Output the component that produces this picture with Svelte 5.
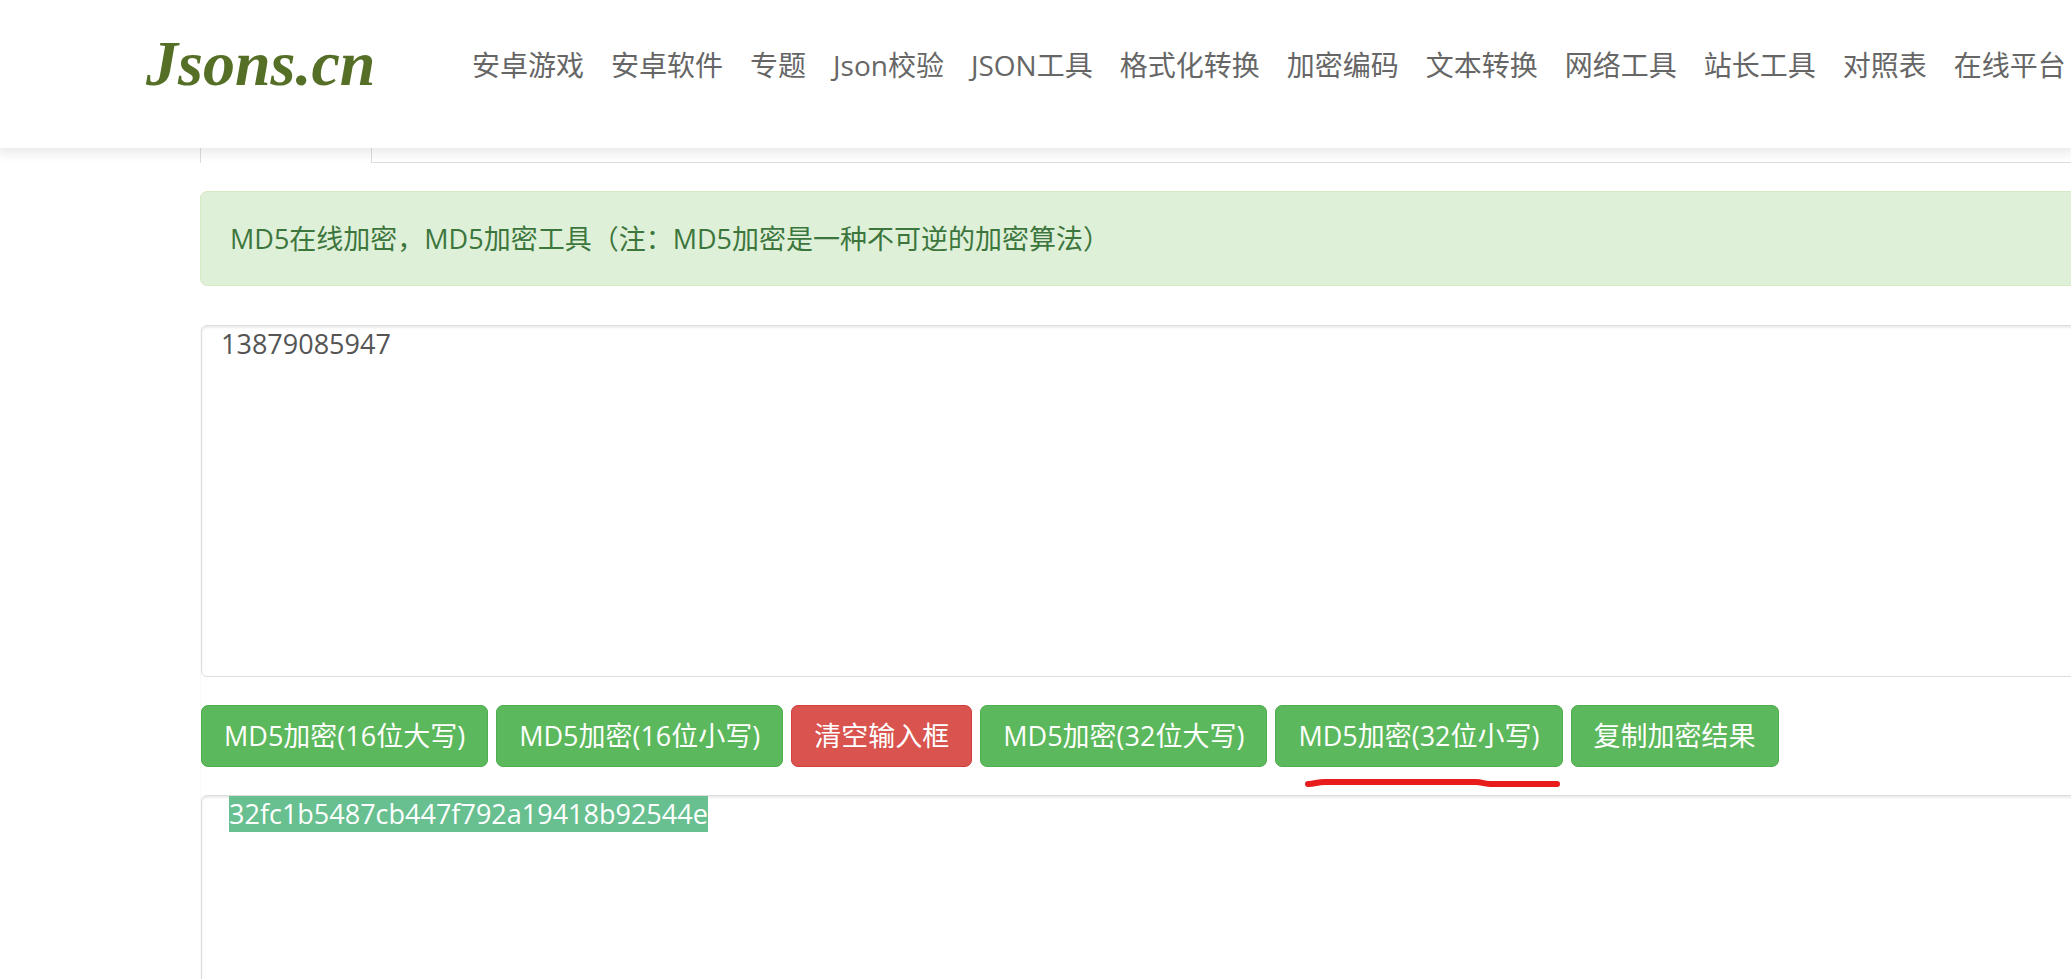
<script lang="ts">
	import { onMount } from 'svelte';

	const links = [
		'安卓游戏',
		'安卓软件',
		'专题',
		'Json校验',
		'JSON工具',
		'格式化转换',
		'加密编码',
		'文本转换',
		'网络工具',
		'站长工具',
		'对照表',
		'在线平台'
	];
	const actions = [
		{ label: 'MD5加密(16位大写)' },
		{ label: 'MD5加密(16位小写)' },
		{ label: '清空输入框', danger: true },
		{ label: 'MD5加密(32位大写)' },
		{ label: 'MD5加密(32位小写)', marked: true },
		{ label: '复制加密结果' }
	];

	let source = $state('13879085947');
	let result = $state('32fc1b5487cb447f792a19418b92544e');
	let output: HTMLTextAreaElement;

	function selectResult() {
		output.focus({ preventScroll: true });
		output.setSelectionRange(0, result.length);
	}

	function run(label: string) {
		if (label === '清空输入框') source = '';
		if (label === '复制加密结果') selectResult();
	}

	onMount(selectResult);
</script>

<div class="page">
	<header>
		<a class="logo" href="#home">Jsons.cn</a>
		<nav>
			{#each links as link (link)}
				<a href="#{link}">{link}</a>
			{/each}
		</nav>
	</header>

	<main>
		<div class="tabs">
			<div class="tab active"></div>
			<div class="tab-rest"></div>
		</div>
		<p class="alert">MD5在线加密，MD5加密工具（注：MD5加密是一种不可逆的加密算法）</p>
		<div class="form">
			<textarea class="source" aria-label="输入" spellcheck="false" bind:value={source}></textarea>
			<div class="actions">
				{#each actions as action (action.label)}
					<div class="action">
						<button class:danger={action.danger} onclick={() => run(action.label)}>
							{action.label}
						</button>
						{#if action.marked}
							<svg class="mark" viewBox="0 0 256 12" aria-hidden="true">
								<path d="M3 7 C10 7 12 5 20 5 H171 C177 5 178 7 185 7 H252" />
							</svg>
						{/if}
					</div>
				{/each}
			</div>
			<textarea
				class="result"
				aria-label="加密结果"
				spellcheck="false"
				bind:this={output}
				bind:value={result}
			></textarea>
		</div>
	</main>
</div>

<style>
	:global(body) {
		margin: 0;
		background: #fff;
	}
	.page {
		height: 100vh;
		overflow: clip;
		font-family: 'Open Sans', 'Noto Sans CJK SC', sans-serif;
		font-size: 27px;
		line-height: 35px;
	}
	header {
		position: relative;
		z-index: 1;
		display: flex;
		box-sizing: border-box;
		height: 148px;
		padding: 26px 0 0 146px;
		background: #fff;
		box-shadow: 0 3px 10px 3px rgba(0, 0, 0, 0.08);
		white-space: nowrap;
	}
	.logo {
		flex: none;
		width: 326px;
		color: #556f27;
		font: italic bold 64px/76px 'Liberation Serif', serif;
		text-decoration: none;
	}
	nav {
		display: flex;
		gap: 27px;
		font-size: 28px;
		line-height: 78px;
	}
	nav a {
		flex: none;
		color: #666;
		text-decoration: none;
	}
	main {
		margin: 0 -40px 0 200px;
	}
	.tabs {
		display: grid;
		grid-template-columns: 172px 1fr;
		height: 15px;
	}
	.tab.active {
		border: solid #ddd;
		border-width: 0 1px;
	}
	.tab-rest {
		border-bottom: 1px solid #ddd;
	}
	.alert {
		margin: 28px 0 39px;
		padding: 29px;
		border: 1px solid #d6e9c6;
		border-radius: 7px;
		background: #dff0d8;
		color: #3c763d;
	}
	.form {
		border-left: 1px solid #fafafa;
	}
	textarea {
		display: block;
		box-sizing: border-box;
		width: 100%;
		height: 352px;
		margin: 0;
		border: 1px solid #ddd;
		border-radius: 6px;
		outline: none;
		background: #fff;
		box-shadow: inset 0 2px 2px rgba(0, 0, 0, 0.08);
		color: #555;
		font: inherit;
		resize: none;
	}
	.source {
		padding: 0 19px;
	}
	.result {
		padding: 0 27px;
	}
	.result::selection {
		background: rgba(102, 190, 142, 0.99);
		color: #fff;
	}
	.actions {
		display: flex;
		gap: 8px;
		padding: 28px 0;
	}
	.action {
		position: relative;
		flex: none;
	}
	button {
		display: block;
		padding: 12px 22px;
		border: 1px solid #4cae4c;
		border-radius: 7px;
		background: #5cb85c;
		color: #fff;
		font: inherit;
		line-height: 36px;
	}
	button.danger {
		border-color: #d43f3a;
		background: #d9534f;
	}
	.mark {
		position: absolute;
		top: 100%;
		left: 30px;
		width: 256px;
		height: 12px;
		margin-top: 10px;
		pointer-events: none;
	}
	.mark path {
		fill: none;
		stroke: #e81c1c;
		stroke-width: 6;
		stroke-linecap: round;
	}
</style>
